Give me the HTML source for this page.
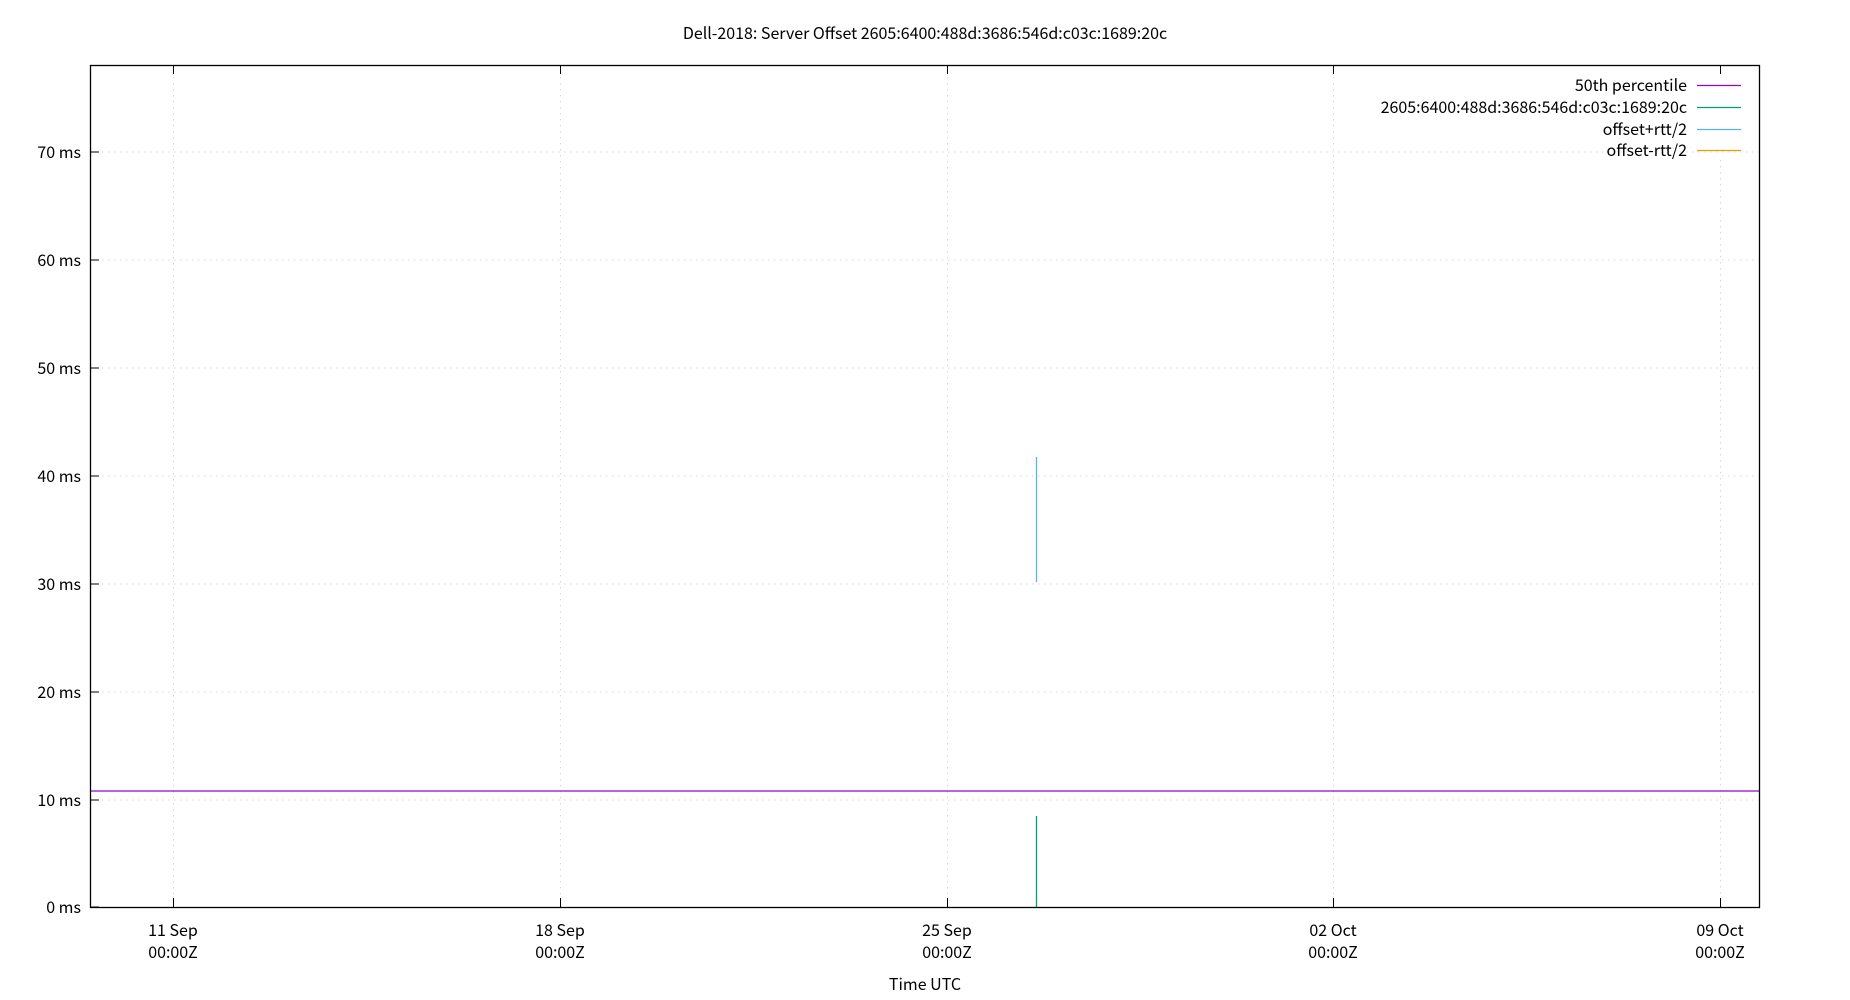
<!DOCTYPE html>
<html><head><style>body{margin:0;background:#fff}svg{display:block}text{font-family:"Noto Sans CJK JP","DejaVu Sans",sans-serif;font-size:16px;fill:#000}</style></head><body>
<svg width="1850" height="1000" xmlns="http://www.w3.org/2000/svg">
<rect width="1850" height="1000" fill="#fff"/>
<g stroke="#d8d8d8" stroke-width="1" stroke-dasharray="1.5,4.5">
<line x1="90" y1="800" x2="1759" y2="800"/><line x1="90" y1="692" x2="1759" y2="692"/><line x1="90" y1="584" x2="1759" y2="584"/><line x1="90" y1="476" x2="1759" y2="476"/><line x1="90" y1="368" x2="1759" y2="368"/><line x1="90" y1="260" x2="1759" y2="260"/><line x1="90" y1="152" x2="1759" y2="152"/>
<line x1="173.5" y1="65" x2="173.5" y2="907"/><line x1="560.5" y1="65" x2="560.5" y2="907"/><line x1="947.5" y1="65" x2="947.5" y2="907"/><line x1="1333.5" y1="65" x2="1333.5" y2="907"/><line x1="1720.5" y1="160" x2="1720.5" y2="907"/>
</g>
<g stroke="#000" stroke-width="1">
<line x1="90" y1="907" x2="99" y2="907"/><line x1="90" y1="800" x2="99" y2="800"/><line x1="90" y1="692" x2="99" y2="692"/><line x1="90" y1="584" x2="99" y2="584"/><line x1="90" y1="476" x2="99" y2="476"/><line x1="90" y1="368" x2="99" y2="368"/><line x1="90" y1="260" x2="99" y2="260"/><line x1="90" y1="152" x2="99" y2="152"/>
<line x1="173.5" y1="898" x2="173.5" y2="907"/><line x1="560.5" y1="898" x2="560.5" y2="907"/><line x1="947.5" y1="898" x2="947.5" y2="907"/><line x1="1333.5" y1="898" x2="1333.5" y2="907"/><line x1="1720.5" y1="898" x2="1720.5" y2="907"/>
<line x1="173.5" y1="65" x2="173.5" y2="74"/><line x1="560.5" y1="65" x2="560.5" y2="74"/><line x1="947.5" y1="65" x2="947.5" y2="74"/><line x1="1333.5" y1="65" x2="1333.5" y2="74"/><line x1="1720.5" y1="65" x2="1720.5" y2="74"/>
</g>
<line x1="90" y1="791" x2="1759" y2="791" stroke="#9400d3" stroke-width="1.3"/>
<line x1="1036.5" y1="457" x2="1036.5" y2="582" stroke="#56b4e9" stroke-width="1.3"/>
<line x1="1036.5" y1="816" x2="1036.5" y2="907" stroke="#009e73" stroke-width="1.3"/>
<rect x="90.5" y="65.5" width="1669" height="842" fill="none" stroke="#000" stroke-width="1.3"/>
<g text-anchor="end">
<text x="81" y="913">0 ms</text><text x="81" y="806">10 ms</text><text x="81" y="698">20 ms</text><text x="81" y="590">30 ms</text><text x="81" y="482">40 ms</text><text x="81" y="374">50 ms</text><text x="81" y="266">60 ms</text><text x="81" y="158">70 ms</text>
<text x="1687" y="91">50th percentile</text><text x="1687" y="113">2605:6400:488d:3686:546d:c03c:1689:20c</text><text x="1687" y="135">offset+rtt/2</text><text x="1687" y="156">offset-rtt/2</text>
</g>
<g stroke-width="1.3"><line x1="1697" y1="85.5" x2="1741" y2="85.5" stroke="#9400d3"/><line x1="1697" y1="107.5" x2="1741" y2="107.5" stroke="#009e73"/><line x1="1697" y1="129.5" x2="1741" y2="129.5" stroke="#56b4e9"/><line x1="1697" y1="150.5" x2="1741" y2="150.5" stroke="#e69f00"/></g>
<g text-anchor="middle">
<text x="925" y="39">Dell-2018: Server Offset 2605:6400:488d:3686:546d:c03c:1689:20c</text>
<text x="173" y="936">11 Sep</text><text x="173" y="958">00:00Z</text>
<text x="560" y="936">18 Sep</text><text x="560" y="958">00:00Z</text>
<text x="947" y="936">25 Sep</text><text x="947" y="958">00:00Z</text>
<text x="1333" y="936">02 Oct</text><text x="1333" y="958">00:00Z</text>
<text x="1720" y="936">09 Oct</text><text x="1720" y="958">00:00Z</text>
<text x="925" y="990">Time UTC</text>
</g>
</svg>
</body></html>
